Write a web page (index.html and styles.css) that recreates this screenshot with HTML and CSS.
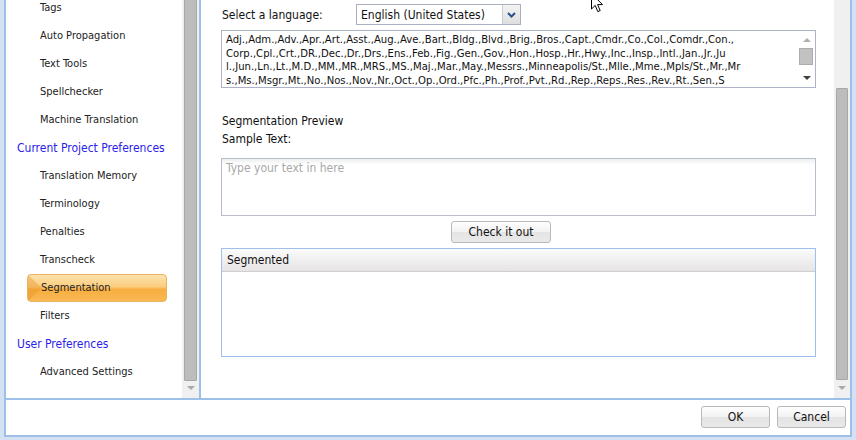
FILE: index.html
```html
<!DOCTYPE html>
<html lang="en">
<head>
    <meta charset="UTF-8">
    <title>Preferences - Segmentation</title>
    <link rel="stylesheet" href="styles.css">
</head>
<body>

<div class="frame">
    <div class="main">
        <div class="sidebar">
            <div class="nav">
                <div class="nav-item">Tags</div>
                <div class="nav-item">Auto Propagation</div>
                <div class="nav-item">Text Tools</div>
                <div class="nav-item">Spellchecker</div>
                <div class="nav-item">Machine Translation</div>
                <div class="nav-group">Current Project Preferences</div>
                <div class="nav-item">Translation Memory</div>
                <div class="nav-item">Terminology</div>
                <div class="nav-item">Penalties</div>
                <div class="nav-item">Transcheck</div>
                <div class="nav-item active">Segmentation</div>
                <div class="nav-item">Filters</div>
                <div class="nav-group">User Preferences</div>
                <div class="nav-item">Advanced Settings</div>
            </div>
        </div>
        <div class="scrollbar side-scroll">
            <div class="thumb"></div>
            <div class="arrow-down"></div>
        </div>

        <div class="content">
            <div class="lang-row">
                <label>Select a language:</label>
                <div class="combo">
                    <span>English (United States)</span>
                    <div class="combo-btn">
                        <svg width="9" height="6" viewBox="0 0 9 6"><path d="M1 1 L4.5 4.5 L8 1" fill="none" stroke="#2d4f8e" stroke-width="2"/></svg>
                    </div>
                </div>
            </div>

            <div class="abbr-box">
                <div class="abbr-text">
                    <div>Adj.,Adm.,Adv.,Apr.,Art.,Asst.,Aug.,Ave.,Bart.,Bldg.,Blvd.,Brig.,Bros.,Capt.,Cmdr.,Co.,Col.,Comdr.,Con.,</div>
                    <div>Corp.,Cpl.,Crt.,DR.,Dec.,Dr.,Drs.,Ens.,Feb.,Fig.,Gen.,Gov.,Hon.,Hosp.,Hr.,Hwy.,Inc.,Insp.,Intl.,Jan.,Jr.,Ju</div>
                    <div>l.,Jun.,Ln.,Lt.,M.D.,MM.,MR.,MRS.,MS.,Maj.,Mar.,May.,Messrs.,Minneapolis/St.,Mlle.,Mme.,Mpls/St.,Mr.,Mr</div>
                    <div>s.,Ms.,Msgr.,Mt.,No.,Nos.,Nov.,Nr.,Oct.,Op.,Ord.,Pfc.,Ph.,Prof.,Pvt.,Rd.,Rep.,Reps.,Res.,Rev.,Rt.,Sen.,S</div>
                </div>
                <div class="box-scroll">
                    <div class="up-small"></div>
                    <div class="thumb-small"></div>
                    <div class="down-small"></div>
                </div>
            </div>

            <div class="title preview-title">Segmentation Preview</div>
            <div class="title">Sample Text:</div>

            <textarea class="sample" placeholder="Type your text in here"></textarea>

            <button class="btn check">Check it out</button>

            <div class="panel">
                <div class="panel-head">Segmented</div>
            </div>
        </div>

        <div class="scrollbar main-scroll">
            <div class="thumb"></div>
            <div class="arrow-down"></div>
        </div>
    </div>

    <div class="footer">
        <button class="btn">OK</button>
        <button class="btn">Cancel</button>
    </div>
</div>

<svg class="cursor" width="13" height="20" viewBox="0 0 13 20">
    <path d="M0.5 0.5 L0.5 16 L4.2 12.4 L6.8 18.6 L9.2 17.6 L6.6 11.6 L11.5 11.6 Z" fill="#fff" stroke="#000" stroke-width="1"/>
</svg>

</body>
</html>
```

FILE: styles.css
```css
body {
    margin: 0;
    padding: 0 0 3px 0;
    width: 856px;
    height: 440px;
    box-sizing: border-box;
    background-color: #d3e1f3;
    font-family: "DejaVu Sans Condensed", "DejaVu Sans", sans-serif;
    font-size: 12px;
    color: #111;
    position: relative;
    overflow: hidden;
}
.frame {
    margin: 0 4px;
    border: 2px solid #9ebfe8;
    border-top: none;
    background-color: #fff;
}
.main {
    display: flex;
    height: 398px;
    border-bottom: 2px solid #9ebfe8;
}

/* left navigation */
.sidebar {
    width: 176px;
    overflow: hidden;
}
.nav {
    margin-top: -6px;
}
.nav-item {
    height: 28px;
    line-height: 28px;
    padding-left: 34px;
    font-size: 11px;
    color: #222;
}
.nav-group {
    height: 28px;
    line-height: 28px;
    padding-left: 11px;
    color: #2a22ea;
}
.nav-item.active {
    position: relative;
    margin-left: 21px;
    width: 140px;
    padding-left: 13px;
    box-sizing: border-box;
    border-radius: 4px;
    border: 1px solid #e8b45e;
    line-height: 26px;
    background: linear-gradient(#fde2ae 0%, #fbcd7e 45%, #f7ae3f 55%, #f8b955 100%);
    overflow: hidden;
}
.nav-item.active::before {
    content: "";
    position: absolute;
    left: 0;
    top: 0;
    width: 14px;
    height: 26px;
    background: rgba(230, 140, 30, 0.35);
    clip-path: polygon(0 0, 100% 50%, 0 100%);
}

/* scrollbars */
.scrollbar {
    position: relative;
    background-color: #f0f0f0;
}
.side-scroll {
    width: 17px;
    border-right: 2px solid #9ebfe8;
}
.main-scroll {
    width: 16px;
}
.thumb {
    position: absolute;
    left: 2px;
    right: 2px;
    background-color: #bcbcbc;
    border: 1px solid #a8a8a8;
    border-radius: 1px;
}
.side-scroll .thumb {
    top: -4px;
    height: 383px;
}
.main-scroll .thumb {
    top: 88px;
    height: 290px;
}
.arrow-down {
    position: absolute;
    top: 386px;
    left: 50%;
    margin-left: -4px;
    border-left: 4px solid transparent;
    border-right: 4px solid transparent;
    border-top: 4px solid #a9a9a9;
}

/* content */
.content {
    flex: 1;
    padding: 4px 18px 0 20px;
}
.lang-row {
    display: flex;
    align-items: center;
    height: 21px;
}
.lang-row label {
    width: 134px;
    padding-left: 1px;
}
.combo {
    display: flex;
    align-items: center;
    width: 165px;
    height: 21px;
    box-sizing: border-box;
    border: 1px solid #aab0c2;
    font-size: 12px;
}
.combo span {
    flex: 1;
    padding-left: 4px;
}
.combo-btn {
    width: 17px;
    height: 19px;
    display: flex;
    align-items: center;
    justify-content: center;
    border-left: 1px solid #c8ccd6;
    background: linear-gradient(#f4f4f4, #dedede);
}

.abbr-box {
    display: flex;
    margin-top: 5px;
    height: 58px;
    box-sizing: border-box;
    border: 1px solid #adb2c6;
}
.abbr-text {
    flex: 1;
    overflow: hidden;
    padding: 2px 0 0 4px;
    font-size: 11.2px;
    line-height: 13.6px;
    white-space: nowrap;
}
.box-scroll {
    position: relative;
    width: 16px;
}
.up-small {
    position: absolute;
    top: 7px;
    left: 4px;
    border-left: 4px solid transparent;
    border-right: 4px solid transparent;
    border-bottom: 4px solid #b0b0b0;
}
.thumb-small {
    position: absolute;
    top: 17px;
    left: 0;
    width: 12px;
    height: 15px;
    background-color: #c2c2c2;
    border: 1px solid #acacac;
}
.down-small {
    position: absolute;
    top: 45px;
    left: 4px;
    border-left: 4px solid transparent;
    border-right: 4px solid transparent;
    border-top: 4px solid #404040;
}

.title {
    line-height: 18px;
    padding-left: 1px;
}
.preview-title {
    margin-top: 24px;
}

.sample {
    display: block;
    width: 100%;
    height: 58px;
    margin-top: 10px;
    box-sizing: border-box;
    border: 1px solid #b8bccb;
    padding: 2px 4px;
    resize: none;
    font-family: inherit;
    font-size: 12px;
    line-height: 14px;
    background: linear-gradient(#edf0f0 0, #fff 6px);
}
.sample::placeholder {
    color: #a8a8a8;
}

.btn {
    height: 22px;
    border: 1px solid #b9b9b9;
    border-radius: 3px;
    background: linear-gradient(#fefefe 0%, #f2f2f2 50%, #e4e4e4 51%, #e9e9e9 100%);
    font-family: inherit;
    font-size: 12px;
    color: #111;
    padding: 0;
}
.check {
    display: block;
    width: 100px;
    margin: 5px 0 0 230px;
}

.panel {
    margin-top: 5px;
    height: 109px;
    box-sizing: border-box;
    border: 1px solid #9fc0ea;
}
.panel-head {
    height: 22px;
    line-height: 22px;
    padding-left: 5px;
    border-bottom: 1px solid #cfcfcf;
    background: linear-gradient(#fbfbfb, #e6e4e4);
}

/* footer buttons */
.footer {
    display: flex;
    justify-content: flex-end;
    gap: 7px;
    height: 35px;
    padding: 6px 4px 0 0;
    box-sizing: border-box;
}
.footer .btn {
    width: 69px;
}

.cursor {
    position: absolute;
    left: 591px;
    top: -7px;
}
```
